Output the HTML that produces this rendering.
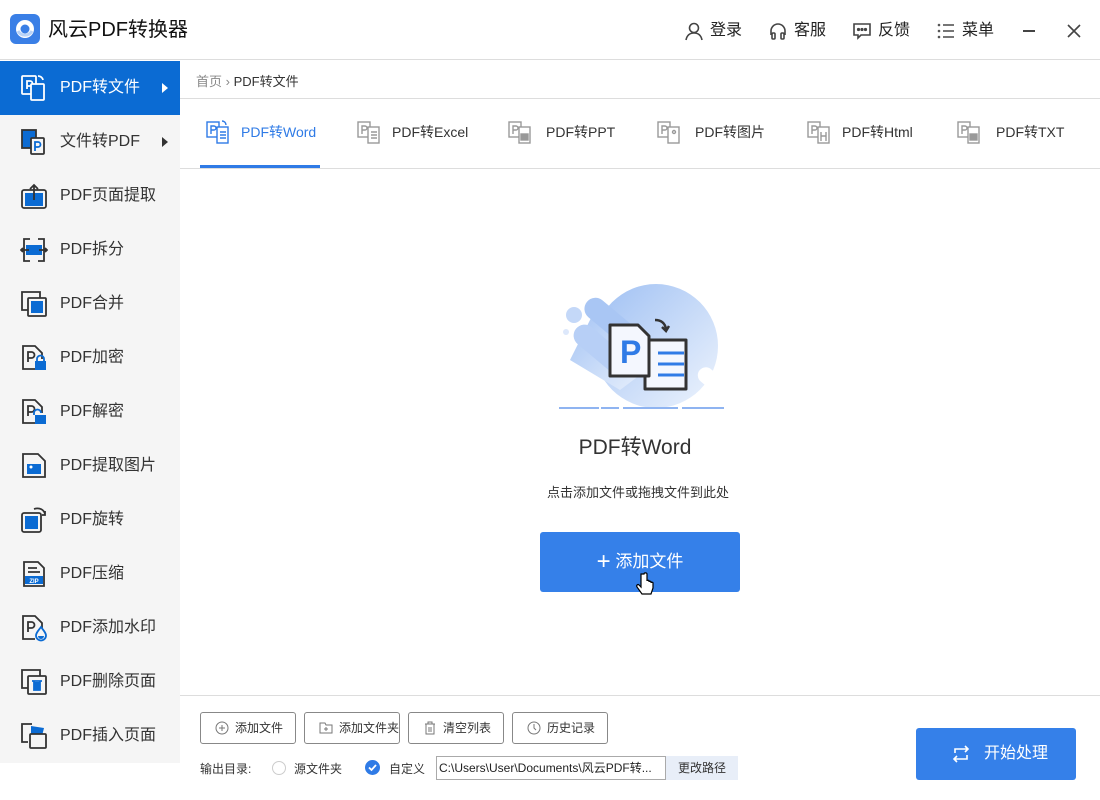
<!DOCTYPE html>
<html><head><meta charset="utf-8"><style>
*{margin:0;padding:0;box-sizing:border-box}
body{width:1100px;height:800px;background:#fff;font-family:"Liberation Sans","Noto Sans CJK SC",sans-serif;position:relative;overflow:hidden;color:#333}
.a{position:absolute}
.hdr{top:0;left:0;width:1100px;height:60px;border-bottom:1px solid #ddd}
.side{top:61px;left:0;width:180px;height:702px;background:#f5f5f5}
.it{position:absolute;left:0;width:180px;height:54px;font-size:16px;color:#333}
.it .t{position:absolute;left:60px;top:16px;line-height:22px}
.it svg{position:absolute;left:20px;top:13px}
.act{background:#0b6bd3;color:#fff}
.arr{position:absolute;left:162px;top:22px;width:0;height:0;border-left:6px solid #333;border-top:5px solid transparent;border-bottom:5px solid transparent}
.tab{position:absolute;top:98px;height:70px;font-size:14px;color:#333}
.tab .t{position:absolute;top:24px;line-height:20px;white-space:nowrap}
.btn{position:absolute;top:712px;height:32px;border:1px solid #888;border-radius:3px;font-size:12px;color:#333;line-height:30px;padding-left:34px}
.btn svg{position:absolute;left:14px;top:8px}
.hi{position:absolute;top:20px;font-size:16px;color:#222;line-height:22px}
</style></head><body>
<div class="a hdr"></div>
<svg class="a" style="left:10px;top:14px" width="30" height="30" viewBox="0 0 30 30"><rect width="30" height="30" rx="6" fill="#3a7fe6"/><circle cx="15" cy="15" r="9" fill="#fff"/><circle cx="15" cy="15" r="4.5" fill="#3a7fe6"/><path d="M8 17a8 8 0 0 0 14 0" stroke="#b9d3f7" stroke-width="3" fill="none"/></svg>
<div class="a" style="left:48px;top:17px;font-size:20px;color:#111;line-height:26px">风云PDF转换器</div>
<svg class="a" style="left:684px;top:21px" width="20" height="20" viewBox="0 0 20 20" fill="none" stroke="#444" stroke-width="1.6"><circle cx="10" cy="7" r="4.5"/><path d="M2 19c1-5 4-7 8-7s7 2 8 7"/></svg>
<div class="hi" style="left:710px">登录</div>
<svg class="a" style="left:768px;top:21px" width="20" height="20" viewBox="0 0 20 20" fill="none" stroke="#444" stroke-width="1.6"><path d="M3 14v-4a7 7 0 0 1 14 0v4"/><rect x="4" y="12" width="3" height="6" rx="1"/><rect x="13" y="12" width="3" height="6" rx="1"/></svg>
<div class="hi" style="left:794px">客服</div>
<svg class="a" style="left:852px;top:21px" width="20" height="20" viewBox="0 0 20 20" fill="none" stroke="#444" stroke-width="1.6"><path d="M2 3h16v11h-9l-3 3v-3H2z"/><circle cx="6.5" cy="8.5" r=".8" fill="#444"/><circle cx="10" cy="8.5" r=".8" fill="#444"/><circle cx="13.5" cy="8.5" r=".8" fill="#444"/></svg>
<div class="hi" style="left:878px">反馈</div>
<svg class="a" style="left:937px;top:22px" width="18" height="18" viewBox="0 0 18 18" fill="#555"><circle cx="2" cy="3" r="1.3"/><circle cx="2" cy="9" r="1.3"/><circle cx="2" cy="15" r="1.3"/><rect x="6" y="2.2" width="11" height="1.6"/><rect x="6" y="8.2" width="11" height="1.6"/><rect x="6" y="14.2" width="11" height="1.6"/></svg>
<div class="hi" style="left:962px">菜单</div>
<div class="a" style="left:1023px;top:30px;width:12px;height:1.6px;background:#444"></div>
<svg class="a" style="left:1067px;top:24px" width="14" height="14" viewBox="0 0 14 14" stroke="#444" stroke-width="1.6"><path d="M1 1l12 12M13 1L1 13"/></svg>

<div class="a side"></div>
<div class="it act" style="top:61px"><svg width="28" height="28" viewBox="0 0 28 28" fill="none" stroke="#fff" stroke-width="1.8"><rect x="2" y="2" width="14" height="18" rx="1"/><path d="M7 15V7h3a2.5 2.5 0 0 1 0 5H7"/><rect x="11" y="10" width="13" height="16" rx="1" fill="#0b6bd3"/><path d="M18 2a5 5 0 0 1 5 4"/></svg><span class="t">PDF转文件</span><i class="arr" style="border-left-color:#fff"></i></div>
<div class="it" style="top:115px"><svg width="28" height="28" viewBox="0 0 28 28" fill="none" stroke="#333" stroke-width="1.8"><rect x="2" y="2" width="14" height="18" fill="#0b6bd3"/><rect x="11" y="10" width="13" height="16" rx="1" fill="#f5f5f5"/><path d="M15 23v-9h3a2.5 2.5 0 0 1 0 5h-3" stroke="#0b6bd3"/></svg><span class="t">文件转PDF</span><i class="arr"></i></div>
<div class="it" style="top:169px"><svg width="28" height="28" viewBox="0 0 28 28" fill="none" stroke="#333" stroke-width="1.8"><rect x="2" y="8" width="24" height="18" rx="2"/><rect x="5" y="11" width="18" height="13" fill="#0b6bd3" stroke="none"/><path d="M14 18V3M10 7l4-4 4 4"/></svg><span class="t">PDF页面提取</span></div>
<div class="it" style="top:223px"><svg width="28" height="28" viewBox="0 0 28 28" fill="none" stroke="#333" stroke-width="1.8"><path d="M10 3H4v22h6M18 3h6v22h-6"/><rect x="6" y="9" width="16" height="10" fill="#0b6bd3" stroke="none"/><path d="M1 14h8M3 12l-2 2 2 2M27 14h-8M25 12l2 2-2 2"/></svg><span class="t">PDF拆分</span></div>
<div class="it" style="top:277px"><svg width="28" height="28" viewBox="0 0 28 28" fill="none" stroke="#333" stroke-width="1.8"><path d="M8 20H2V2h18v6"/><rect x="8" y="8" width="18" height="18" rx="1"/><rect x="11" y="11" width="12" height="12" fill="#0b6bd3" stroke="none"/></svg><span class="t">PDF合并</span></div>
<div class="it" style="top:331px"><svg width="28" height="28" viewBox="0 0 28 28" fill="none" stroke="#333" stroke-width="1.8"><path d="M16 25H3V2h12l7 7v6"/><path d="M8 18V8h3.5a3 3 0 0 1 0 6H8"/><rect x="15" y="17" width="11" height="9" fill="#0b6bd3" stroke="none"/><path d="M17 17v-2a3.5 3.5 0 0 1 7 0v2" stroke="#0b6bd3"/></svg><span class="t">PDF加密</span></div>
<div class="it" style="top:385px"><svg width="28" height="28" viewBox="0 0 28 28" fill="none" stroke="#333" stroke-width="1.8"><path d="M16 25H3V2h12l7 7v6"/><path d="M8 18V8h3.5a3 3 0 0 1 0 6H8"/><rect x="15" y="17" width="11" height="9" fill="#0b6bd3" stroke="none"/><path d="M14 17v-2a3.5 3.5 0 0 1 7 0" stroke="#0b6bd3"/></svg><span class="t">PDF解密</span></div>
<div class="it" style="top:439px"><svg width="28" height="28" viewBox="0 0 28 28" fill="none" stroke="#333" stroke-width="1.8"><path d="M10 2H3v23h22V9l-7-7z"/><rect x="7" y="12" width="14" height="10" fill="#0b6bd3" stroke="none"/><circle cx="11" cy="15" r="1.5" fill="#fff" stroke="none"/></svg><span class="t">PDF提取图片</span></div>
<div class="it" style="top:493px"><svg width="28" height="28" viewBox="0 0 28 28" fill="none" stroke="#333" stroke-width="1.8"><rect x="2" y="7" width="19" height="19" rx="2"/><rect x="5" y="10" width="13" height="13" fill="#0b6bd3" stroke="none"/><path d="M14 3c6-2 10 1 11 5M25 5v4h-3"/></svg><span class="t">PDF旋转</span></div>
<div class="it" style="top:547px"><svg width="28" height="28" viewBox="0 0 28 28" fill="none" stroke="#333" stroke-width="1.8"><path d="M4 2h14l6 6v18H4z"/><path d="M8 8h9M8 12h12"/><rect x="5" y="16" width="18" height="8" fill="#0b6bd3" stroke="none"/><text x="14" y="23" font-size="6" fill="#fff" stroke="none" text-anchor="middle" font-family="Liberation Sans" font-weight="bold">ZIP</text></svg><span class="t">PDF压缩</span></div>
<div class="it" style="top:601px"><svg width="28" height="28" viewBox="0 0 28 28" fill="none" stroke="#333" stroke-width="1.8"><path d="M15 25H3V2h12l7 7v5"/><path d="M8 18V8h3.5a3 3 0 0 1 0 6H8"/><path d="M21 13c-3 4-5 6-5 8.5a5 5 0 0 0 10 0c0-2.5-2-4.5-5-8.5z" stroke="#0b6bd3" fill="#f5f5f5"/><path d="M18 22a3 3 0 0 0 6 0" fill="#0b6bd3" stroke="none"/></svg><span class="t">PDF添加水印</span></div>
<div class="it" style="top:655px"><svg width="28" height="28" viewBox="0 0 28 28" fill="none" stroke="#333" stroke-width="1.8"><path d="M8 20H2V2h18v6"/><rect x="8" y="8" width="18" height="18" rx="1"/><path d="M12 13h10M14 13v9h6v-9" stroke="#0b6bd3"/><rect x="14" y="14" width="6" height="8" fill="#0b6bd3" stroke="none"/></svg><span class="t">PDF删除页面</span></div>
<div class="it" style="top:709px"><svg width="28" height="28" viewBox="0 0 28 28" fill="none" stroke="#333" stroke-width="1.8"><path d="M8 20H2V2h10"/><path d="M11 4l13 2-2 8-11-2z" fill="#0b6bd3" stroke="none"/><rect x="10" y="12" width="16" height="14" rx="1" fill="#f5f5f5"/></svg><span class="t">PDF插入页面</span></div>

<div class="a" style="left:196px;top:71px;font-size:13px;color:#888">首页 › <span style="color:#333">PDF转文件</span></div>
<div class="a" style="left:180px;top:98px;width:920px;height:1px;background:#ddd"></div>
<div class="a" style="left:180px;top:168px;width:920px;height:1px;background:#ddd"></div>
<div class="a" style="left:200px;top:165px;width:120px;height:3px;background:#2f7be6"></div>

<div class="tab" style="left:205px"><svg class="a" style="top:21px" width="28" height="26" viewBox="0 0 28 26" fill="none" stroke="#2f7be6" stroke-width="1.4"><rect x="2" y="3" width="12" height="15"/><path d="M6 15V7h3a2 2 0 0 1 0 4H6"/><rect x="12" y="8" width="11" height="16" fill="#fff"/><path d="M15 13h6M15 16h6M15 19h6M17 2a4 4 0 0 1 4 4"/></svg><span class="t" style="left:36px;color:#2f7be6">PDF转Word</span></div>
<div class="tab" style="left:356px"><svg class="a" style="top:21px" width="28" height="26" viewBox="0 0 28 26" fill="none" stroke="#999" stroke-width="1.4"><rect x="2" y="3" width="12" height="15"/><path d="M6 15V7h3a2 2 0 0 1 0 4H6"/><rect x="12" y="8" width="11" height="16" fill="#fff"/><path d="M15 13h6M15 16h6M15 19h6"/></svg><span class="t" style="left:36px">PDF转Excel</span></div>
<div class="tab" style="left:507px"><svg class="a" style="top:21px" width="28" height="26" viewBox="0 0 28 26" fill="none" stroke="#999" stroke-width="1.4"><rect x="2" y="3" width="12" height="15"/><path d="M6 15V7h3a2 2 0 0 1 0 4H6"/><rect x="12" y="8" width="11" height="16" fill="#fff"/><rect x="14" y="15" width="7" height="6" fill="#999"/></svg><span class="t" style="left:39px">PDF转PPT</span></div>
<div class="tab" style="left:656px"><svg class="a" style="top:21px" width="28" height="26" viewBox="0 0 28 26" fill="none" stroke="#999" stroke-width="1.4"><rect x="2" y="3" width="12" height="15"/><path d="M6 15V7h3a2 2 0 0 1 0 4H6"/><rect x="12" y="8" width="11" height="16" fill="#fff"/><circle cx="18" cy="13" r="1.5"/></svg><span class="t" style="left:39px">PDF转图片</span></div>
<div class="tab" style="left:806px"><svg class="a" style="top:21px" width="28" height="26" viewBox="0 0 28 26" fill="none" stroke="#999" stroke-width="1.4"><rect x="2" y="3" width="12" height="15"/><path d="M6 15V7h3a2 2 0 0 1 0 4H6"/><rect x="12" y="8" width="11" height="16" fill="#fff"/><path d="M15 13v9M20 13v9M15 17h5"/></svg><span class="t" style="left:36px">PDF转Html</span></div>
<div class="tab" style="left:956px"><svg class="a" style="top:21px" width="28" height="26" viewBox="0 0 28 26" fill="none" stroke="#999" stroke-width="1.4"><rect x="2" y="3" width="12" height="15"/><path d="M6 15V7h3a2 2 0 0 1 0 4H6"/><rect x="12" y="8" width="11" height="16" fill="#fff"/><rect x="14" y="15" width="7" height="6" fill="#999"/></svg><span class="t" style="left:40px">PDF转TXT</span></div>

<svg class="a" style="left:540px;top:280px" width="190" height="135" viewBox="0 0 190 135">
<defs><linearGradient id="g" x1="0" y1="0" x2="1" y2="1"><stop offset="0" stop-color="#9fc0f3"/><stop offset="1" stop-color="#eef4fd"/></linearGradient></defs>
<circle cx="116" cy="66" r="62" fill="url(#g)"/>
<path d="M60 20l60 60-40 30-50-30z" fill="url(#g)"/>
<rect x="40" y="30" width="60" height="22" rx="11" transform="rotate(40 70 41)" fill="#a9c6f4"/>
<rect x="28" y="60" width="70" height="22" rx="11" transform="rotate(40 63 71)" fill="#b7cff6"/>
<circle cx="34" cy="35" r="8" fill="#c4d8f8"/>
<circle cx="26" cy="52" r="3" fill="#dde8fb"/>
<rect x="155" y="95" width="40" height="16" rx="8" transform="rotate(40 175 103)" fill="#fff"/>
<path d="M105 60h41v49h-41z" fill="#f4f7fe" stroke="#333" stroke-width="3" stroke-linejoin="round"/>
<path d="M118 73h26M118 84h26M118 95h26" stroke="#2f7be6" stroke-width="3"/>
<path d="M70 45h28l11 11v40H70z" fill="#f4f7fe" stroke="#333" stroke-width="3" stroke-linejoin="round"/>
<text x="80" y="83" font-family="Liberation Sans" font-weight="bold" font-size="32" fill="#2f7be6">P</text>
<path d="M115 40c6 0 10 3 11 9M122 47l4 4 3-5" stroke="#333" stroke-width="2.5" fill="none"/>
<path d="M19 128h40M61 128h18M83 128h55M142 128h42" stroke="#8fb4f1" stroke-width="2"/>
</svg>
<div class="a" style="left:540px;top:435px;width:190px;text-align:center;font-size:21px;color:#333;line-height:26px">PDF转Word</div>
<div class="a" style="left:500px;top:482px;width:276px;text-align:center;font-size:13px;color:#333">点击添加文件或拖拽文件到此处</div>
<div class="a" style="left:540px;top:532px;width:200px;height:60px;background:#3580e9;border-radius:3px;color:#fff;font-size:17px;line-height:60px;text-align:center"><span style="font-size:24px;vertical-align:-2px">+</span> 添加文件</div>
<svg class="a" style="left:636px;top:572px" width="18" height="26" viewBox="0 0 18 26"><path d="M5 2v13l-2-2c-1-1-3 0-2 2l5 7h9l2-6v-5c0-1-2-1-2 0v-1c0-1-2-1-2 0v-1c0-1-2-1-2 0V2c0-1.5-3-1.5-3 0z" fill="#fff" stroke="#000" stroke-width="1.2"/></svg>

<div class="a" style="left:180px;top:695px;width:920px;height:1px;background:#ddd"></div>
<div class="btn" style="left:200px;width:96px"><svg width="14" height="14" viewBox="0 0 14 14" fill="none" stroke="#777"><circle cx="7" cy="7" r="6"/><path d="M7 4v6M4 7h6"/></svg>添加文件</div>
<div class="btn" style="left:304px;width:96px"><svg width="14" height="14" viewBox="0 0 14 14" fill="none" stroke="#777"><path d="M1 2h5l1 2h6v8H1z"/><path d="M7 6v4M5 8h4"/></svg>添加文件夹</div>
<div class="btn" style="left:408px;width:96px"><svg width="14" height="14" viewBox="0 0 14 14" fill="none" stroke="#777"><path d="M2 3h10M5 3V1h4v2M3 3v10h8V3M6 6v5M8 6v5"/></svg>清空列表</div>
<div class="btn" style="left:512px;width:96px"><svg width="14" height="14" viewBox="0 0 14 14" fill="none" stroke="#777"><circle cx="7" cy="7" r="6"/><path d="M7 3v4l2 2"/></svg>历史记录</div>
<div class="a" style="left:200px;top:760px;font-size:12px;color:#333">输出目录:</div>
<div class="a" style="left:272px;top:761px;width:14px;height:14px;border:1px solid #ccc;border-radius:50%"></div>
<div class="a" style="left:294px;top:760px;font-size:12px;color:#333">源文件夹</div>
<svg class="a" style="left:365px;top:760px" width="15" height="15" viewBox="0 0 15 15"><circle cx="7.5" cy="7.5" r="7.5" fill="#2f7be6"/><path d="M4 7.5l2.5 2.5 4.5-5" stroke="#fff" stroke-width="1.8" fill="none"/></svg>
<div class="a" style="left:389px;top:760px;font-size:12px;color:#333">自定义</div>
<div class="a" style="left:436px;top:756px;width:230px;height:24px;border:1px solid #aaa;font-size:12px;line-height:22px;padding-left:2px;white-space:nowrap;overflow:hidden;color:#222">C:\Users\User\Documents\风云PDF转...</div>
<div class="a" style="left:666px;top:756px;width:72px;height:24px;background:#e8eef8;font-size:12px;line-height:24px;text-align:center;color:#333">更改路径</div>
<div class="a" style="left:916px;top:728px;width:160px;height:52px;background:#3580e9;border-radius:3px;color:#fff;font-size:16px;line-height:52px;padding-left:68px">开始处理</div>
<svg class="a" style="left:951px;top:745px" width="20" height="18" viewBox="0 0 20 18" fill="none" stroke="#fff" stroke-width="1.6"><path d="M4 8V4h13M14 1l3 3-3 3M16 10v4H3M6 17l-3-3 3-3"/></svg>
</body></html>
